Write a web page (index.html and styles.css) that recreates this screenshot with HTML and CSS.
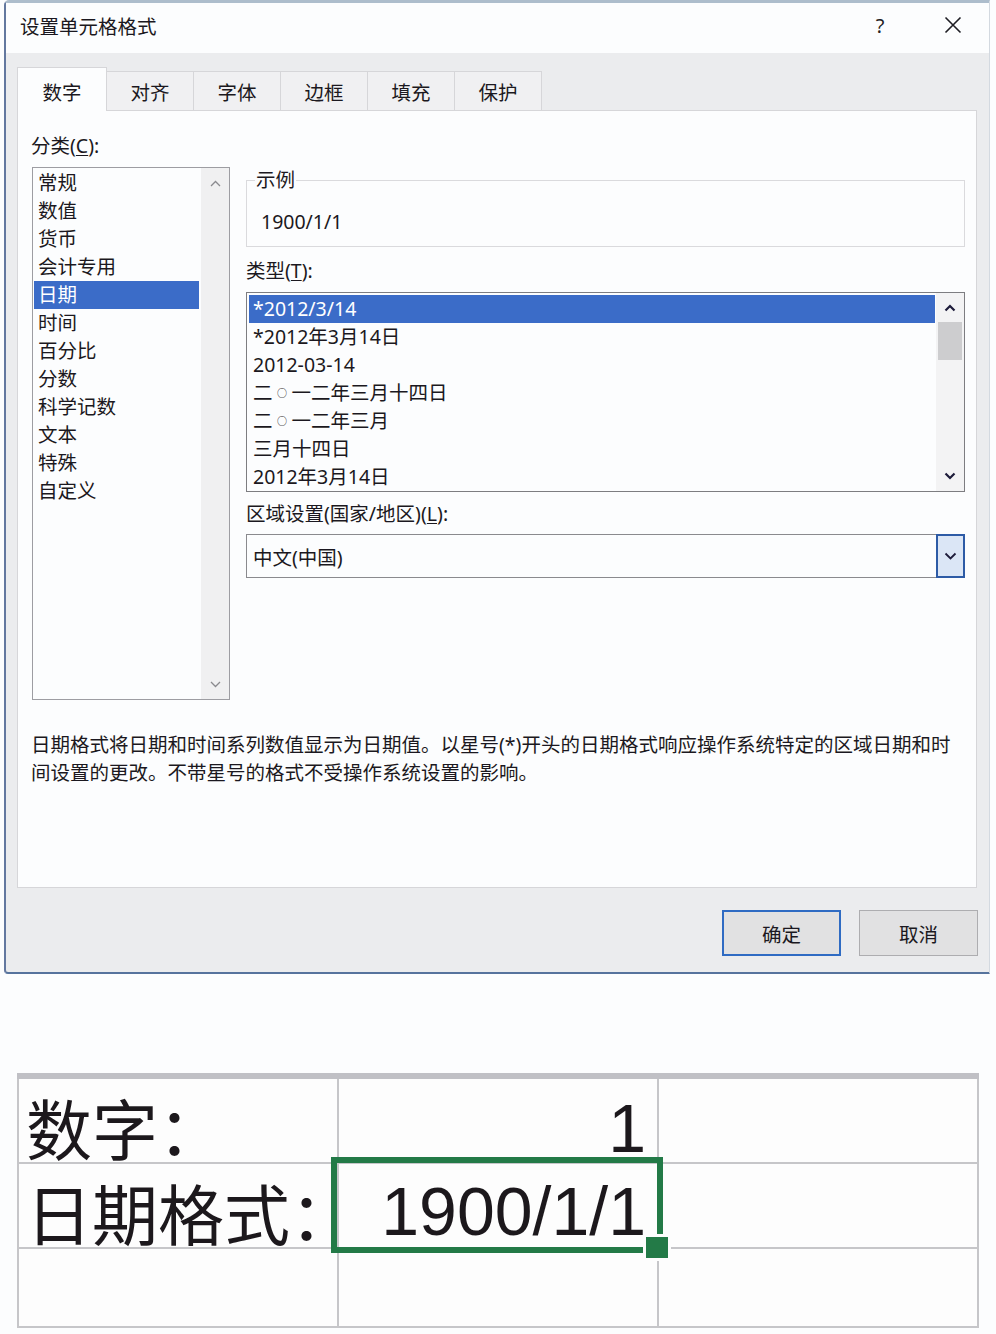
FILE: index.html
```html
<!DOCTYPE html>
<html lang="zh-CN">
<head>
<meta charset="utf-8">
<title>设置单元格格式</title>
<link rel="stylesheet" href="styles.css">
</head>
<body>
<div class="dialog">
  <div class="titlebar">
    <span class="title">设置单元格格式</span>
    <span class="help">?</span>
    <span class="close"><svg width="18" height="18" viewBox="0 0 18 18"><path d="M1.5 1.5L16.5 16.5M16.5 1.5L1.5 16.5" fill="none" stroke="#1e1e24" stroke-width="1.6"/></svg></span>
  </div>
  <div class="dlg-body">
    <div class="tabs">
      <div class="tab active">数字</div>
      <div class="tab">对齐</div>
      <div class="tab">字体</div>
      <div class="tab">边框</div>
      <div class="tab">填充</div>
      <div class="tab">保护</div>
    </div>
    <div class="panel">
      <div class="cols">
        <div class="col-left">
          <div class="label">分类(<u>C</u>):</div>
          <div class="catlist">
            <ul class="items">
              <li>常规</li>
              <li>数值</li>
              <li>货币</li>
              <li>会计专用</li>
              <li class="sel">日期</li>
              <li>时间</li>
              <li>百分比</li>
              <li>分数</li>
              <li>科学记数</li>
              <li>文本</li>
              <li>特殊</li>
              <li>自定义</li>
            </ul>
            <div class="vscroll">
              <span class="sb-btn"><svg width="11" height="7" viewBox="0 0 11 7"><path d="M1 6L5.5 1.5L10 6" fill="none" stroke="#8a8a8e" stroke-width="1.3"/></svg></span>
              <span class="sb-btn"><svg width="11" height="7" viewBox="0 0 11 7"><path d="M1 1L5.5 5.5L10 1" fill="none" stroke="#8a8a8e" stroke-width="1.3"/></svg></span>
            </div>
          </div>
        </div>
        <div class="col-right">
          <fieldset class="sample">
            <legend>示例</legend>
            <div class="sample-value">1900/1/1</div>
          </fieldset>
          <div class="label label-type">类型(<u>T</u>):</div>
          <div class="typelist">
            <ul class="items">
              <li class="sel">*2012/3/14</li>
              <li>*2012年3月14日</li>
              <li>2012-03-14</li>
              <li>二<span class="o">○</span>一二年三月十四日</li>
              <li>二<span class="o">○</span>一二年三月</li>
              <li>三月十四日</li>
              <li>2012年3月14日</li>
            </ul>
            <div class="vscroll dark">
              <span class="sb-btn up"><svg width="12" height="8" viewBox="0 0 12 8"><path d="M1.5 6.5L6 2L10.5 6.5" fill="none" stroke="#1d1b3a" stroke-width="2.2"/></svg></span>
              <span class="thumb"></span>
              <span class="track"></span>
              <span class="sb-btn down"><svg width="12" height="8" viewBox="0 0 12 8"><path d="M1.5 1.5L6 6L10.5 1.5" fill="none" stroke="#1d1b3a" stroke-width="2.2"/></svg></span>
            </div>
          </div>
          <div class="label label-locale">区域设置(国家/地区)(<u>L</u>):</div>
          <div class="dropdown">
            <span class="dd-text">中文(中国)</span>
            <span class="dd-btn"><svg width="13" height="8" viewBox="0 0 13 8"><path d="M1.5 1.5L6.5 6.5L11.5 1.5" fill="none" stroke="#1d1b3a" stroke-width="1.8"/></svg></span>
          </div>
        </div>
      </div>
      <p class="desc">日期格式将日期和时间系列数值显示为日期值。以星号(*)开头的日期格式响应操作系统特定的区域日期和时<br>间设置的更改。不带星号的格式不受操作系统设置的影响。</p>
    </div>
    <div class="footer">
      <button class="btn default">确定</button>
      <button class="btn">取消</button>
    </div>
  </div>
</div>

<div class="sheet">
  <div class="cell cjk r1">数字：</div>
  <div class="cell num r1">1</div>
  <div class="cell"></div>
  <div class="cell cjk r2">日期格式：</div>
  <div class="cell num r2 selected">1900/1/1</div>
  <div class="cell"></div>
  <div class="cell"></div>
  <div class="cell"></div>
  <div class="cell"></div>
</div>
</body>
</html>
```
FILE: styles.css
```css
* { box-sizing: border-box; }
html, body { margin: 0; padding: 0; }
body {
  width: 996px;
  height: 1334px;
  overflow: hidden;
  background: #fcfdfe;
  font-family: "Noto Sans", "Noto Sans CJK SC", sans-serif;
  color: #1b1820;
}

/* ---------- dialog ---------- */
.dialog {
  width: 986px;
  margin-left: 4px;
  border-top: 3px solid #adbdcc;
  border-left: 2px solid #63789f;
  border-right: 1px solid #d3d9e0;
  border-bottom: 2px solid #56739d;
  border-radius: 5px 0 0 4px;
  background: #ebecee;
}
.titlebar {
  height: 50px;
  background: #fcfdfe;
  display: flex;
  align-items: center;
  padding: 0 13px 6px 14px;
  font-size: 19.5px;
}
.title { flex: 1; }
.help {
  width: 30px;
  margin-right: 35px;
  text-align: center;
  font-size: 20px;
  color: #222;
}
.close {
  width: 46px;
  display: flex;
  justify-content: center;
}

.dlg-body { padding: 0 12px 0 11px; }

.tabs {
  display: flex;
  align-items: flex-end;
  height: 43px;
  margin-top: 14px;
  font-size: 19.5px;
}
.tab {
  width: 88px;
  height: 39px;
  margin-left: -1px;
  display: flex;
  align-items: center;
  justify-content: center;
  background: #f0f0f2;
  border: 1px solid #d6d6d9;
  border-bottom: none;
}
.tab.active {
  width: 90px;
  height: 44px;
  margin-left: 0;
  margin-bottom: -1px;
  padding-top: 3px;
  background: #fcfdfe;
  position: relative;
  z-index: 1;
}

.panel {
  height: 778px;
  background: #fcfdfe;
  border: 1px solid #d6d6d9;
  padding: 24px 11px 0 13px;
  font-size: 19.5px;
}
.cols {
  display: flex;
  gap: 16px;
  align-items: flex-start;
}
.col-left { width: 199px; }
.col-right { flex: 1; margin-top: 34px; }
.label { height: 22px; line-height: 22px; white-space: nowrap; }
.label u { text-underline-offset: 2px; }

.items {
  list-style: none;
  margin: 0;
  flex: 1;
}
.items li {
  height: 28px;
  line-height: 28px;
  padding-left: 4px;
  white-space: nowrap;
}
.items li.sel {
  background: #3b6cc8;
  color: #fff;
}
.items .o {
  display: inline-block;
  width: 19px;
  text-align: center;
  font-size: 10px;
  line-height: 10px;
  vertical-align: 3px;
}

.catlist {
  margin: 10px 0 0 1px;
  height: 533px;
  border: 1px solid #9d9da2;
  display: flex;
}
.catlist .items { padding: 1px 2px 0 1px; }

.vscroll {
  width: 28px;
  background: #f0f0f1;
  display: flex;
  flex-direction: column;
  justify-content: space-between;
}
.sb-btn {
  height: 30px;
  display: flex;
  align-items: center;
  justify-content: center;
}

.sample {
  margin: 0;
  min-width: 0;
  padding: 0 0 13px 8px;
  border: 1px solid #dadadd;
}
.sample legend {
  padding: 0 1px;
  line-height: 22px;
}
.sample-value {
  margin-top: 20px;
  padding-left: 6px;
  line-height: 22px;
}

.label-type { margin-top: 13px; }
.typelist {
  margin-top: 10px;
  height: 200px;
  border: 1px solid #7d7d81;
  display: flex;
}
.typelist .items { padding: 2px 1px 0 2px; }
.vscroll.dark {
  background: #f3f3f4;
  justify-content: flex-start;
}
.vscroll.dark .sb-btn.up { height: 29px; }
.vscroll.dark .thumb {
  height: 38px;
  margin: 0 2px;
  background: #cdcdcf;
}
.vscroll.dark .track { flex: 1; }

.label-locale { margin-top: 11px; }
.dropdown {
  margin-top: 9px;
  height: 44px;
  border: 1px solid #8a8a8e;
  display: flex;
  align-items: center;
  background: #fcfdfe;
}
.dd-text { flex: 1; padding-left: 6px; }
.dd-btn {
  width: 29px;
  align-self: stretch;
  margin: -1px -1px -1px 0;
  border: 2px solid #2d5ba6;
  background: #dbe6f6;
  display: flex;
  align-items: center;
  justify-content: center;
}

.desc {
  margin: 31px 0 0 0;
  line-height: 28px;
  white-space: nowrap;
}

.footer {
  height: 84px;
  padding-top: 22px;
  margin-right: -1px;
  display: flex;
  justify-content: flex-end;
  gap: 18px;
}
.btn {
  width: 119px;
  height: 46px;
  padding: 0;
  background: #e1e1e2;
  border: 1px solid #adadb0;
  font-family: inherit;
  font-size: 19.5px;
  color: #1b1820;
}
.btn.default { border: 2px solid #2f6bc3; }

/* ---------- spreadsheet ---------- */
.sheet {
  margin: 99px 0 0 17px;
  width: 962px;
  display: grid;
  grid-template-columns: 318px 318px 318px;
  grid-template-rows: 83px 83px 77px;
  gap: 2px;
  padding: 0 2px 2px;
  background: #c6c6c9;
  border-top: 6px solid #c0c0c5;
}
.cell {
  background: #fdfdfd;
  display: flex;
  align-items: flex-end;
  white-space: nowrap;
  color: #1c181c;
}
.cell.cjk {
  font-family: "Noto Sans CJK SC", sans-serif;
  font-size: 66px;
  line-height: 66px;
  padding: 0 0 3px 7px;
}
.cell.num {
  justify-content: flex-end;
  font-family: "Liberation Sans", sans-serif;
  font-size: 68px;
  line-height: 68px;
  padding-right: 11px;
}
.cell.num.r2 { padding-bottom: 2px; }
.cell.selected { position: relative; }
.cell.selected::before {
  content: "";
  position: absolute;
  left: -8px;
  right: -6px;
  top: -7px;
  bottom: -6px;
  border: 6px solid #237a47;
}
.cell.selected::after {
  content: "";
  position: absolute;
  right: -11px;
  bottom: -11px;
  width: 22px;
  height: 21px;
  background: #237a47;
  box-shadow: 0 0 0 3px #fdfdfd;
}
```
